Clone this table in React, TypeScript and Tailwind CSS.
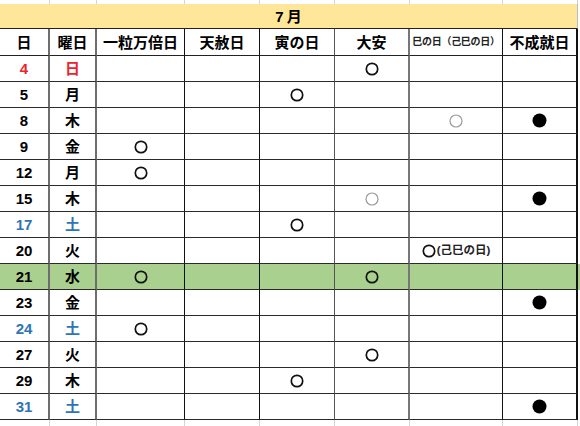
import React from "react";

const COLS = "grid grid-cols-[50px_47px_88px_75px_75px_75px_93px_75px]";

const colBorder = [
  "border-r-2 border-r-[#6e6e6e]",
  "border-r-2 border-r-[#6e6e6e]",
  "border-r border-r-[#111]",
  "border-r border-r-[#111]",
  "border-r border-r-[#555]",
  "border-r-2 border-r-[#777]",
  "border-r border-r-[#111]",
  "border-r-2 border-r-[#111]",
];

type Mark = "o" | "g" | "f" | "k";

type Row = {
  d: string;
  w: string;
  c?: "red" | "blue";
  green?: boolean;
  m: Record<number, Mark>;
};

const rows: Row[] = [
  { d: "4", w: "日", c: "red", m: { 5: "o" } },
  { d: "5", w: "月", m: { 4: "o" } },
  { d: "8", w: "木", m: { 6: "g", 7: "f" } },
  { d: "9", w: "金", m: { 2: "o" } },
  { d: "12", w: "月", m: { 2: "o" } },
  { d: "15", w: "木", m: { 5: "g", 7: "f" } },
  { d: "17", w: "土", c: "blue", m: { 4: "o" } },
  { d: "20", w: "火", m: { 6: "k" } },
  { d: "21", w: "水", green: true, m: { 2: "o", 5: "o" } },
  { d: "23", w: "金", m: { 7: "f" } },
  { d: "24", w: "土", c: "blue", m: { 2: "o" } },
  { d: "27", w: "火", m: { 5: "o" } },
  { d: "29", w: "木", m: { 4: "o" } },
  { d: "31", w: "土", c: "blue", m: { 7: "f" } },
];

function Circle({ gray }: { gray?: boolean }) {
  return (
    <svg width="14" height="14" viewBox="0 0 14 14">
      <circle
        cx="7"
        cy="7"
        r={gray ? 6 : 5.7}
        fill="none"
        stroke={gray ? "#9a9a9a" : "#111"}
        strokeWidth={gray ? 1.2 : 1.7}
      />
    </svg>
  );
}

function Dot() {
  return (
    <svg width="15" height="15" viewBox="0 0 15 15">
      <circle cx="7.5" cy="7.5" r="7" fill="#000" />
    </svg>
  );
}

function MarkView({ m }: { m?: Mark }) {
  if (!m) return null;
  if (m === "o") return <Circle />;
  if (m === "g") return <Circle gray />;
  if (m === "f") return <Dot />;
  return (
    <div className="flex items-center gap-[1px]">
      <Circle />
      <span className="text-[11.5px] font-bold leading-none text-[#222]">(己巳の日)</span>
    </div>
  );
}

export default function App() {
  const font = {
    fontFamily: '"Liberation Sans", "Noto Sans CJK JP", sans-serif',
  };
  return (
    <div className="w-[580px] h-[426px] bg-white overflow-hidden" style={font}>
      {/* top gridline strip */}
      <div className={`${COLS} h-[4px]`}>
        {colBorder.map((_, i) => (
          <div key={i} className="border-r border-r-[#d4d4d4]" />
        ))}
      </div>
      {/* month header */}
      <div className="w-[578px] h-[25px] bg-[#ffe699] border-b border-b-[#222] border-r border-r-[#bbb] flex items-center justify-center">
        <span className="text-[15px] font-bold text-black leading-none flex gap-[3px]">
          <span>7</span>
          <span>月</span>
        </span>
      </div>
      {/* column headers */}
      <div className={`${COLS} h-[27px]`}>
        {["日", "曜日", "一粒万倍日", "天赦日", "寅の日", "大安"].map((t, i) => (
          <div
            key={i}
            className={`${colBorder[i]} border-b border-b-[#222] flex items-center justify-center text-[15px] font-bold text-black leading-none`}
          >
            {t}
          </div>
        ))}
        <div className={`${colBorder[6]} border-b border-b-[#222] flex items-center justify-center text-[10px] font-bold text-[#222] leading-none tracking-[-0.3px]`}>
          巳の日（己巳の日）
        </div>
        <div className={`${colBorder[7]} border-b border-b-[#222] flex items-center justify-center text-[15px] font-bold text-black leading-none`}>
          不成就日
        </div>
      </div>
      {/* data rows */}
      {rows.map((r) => {
        const tc =
          r.c === "red" ? "text-[#e8262b]" : r.c === "blue" ? "text-[#2e75b6]" : "text-black";
        const bg = r.green ? "bg-[#a9d08e]" : "bg-white";
        return (
          <div key={r.d} className={`${COLS} h-[26px] ${bg}`}>
            <div className={`${colBorder[0]} border-b border-b-[#2a2a2a] flex items-center justify-center text-[15px] font-bold leading-none ${tc}`}>
              {r.d}
            </div>
            <div className={`${colBorder[1]} border-b border-b-[#2a2a2a] flex items-center justify-center text-[15px] font-bold leading-none ${tc}`}>
              {r.w}
            </div>
            {[2, 3, 4, 5, 6, 7].map((ci) => (
              <div
                key={ci}
                className={`${colBorder[ci]} border-b border-b-[#2a2a2a] flex items-center justify-center`}
              >
                <MarkView m={r.m[ci]} />
              </div>
            ))}
          </div>
        );
      })}
      {/* bottom gridline strip */}
      <div className={`${COLS} h-[6px]`}>
        {colBorder.map((_, i) => (
          <div key={i} className="border-r border-r-[#d4d4d4]" />
        ))}
      </div>
    </div>
  );
}
